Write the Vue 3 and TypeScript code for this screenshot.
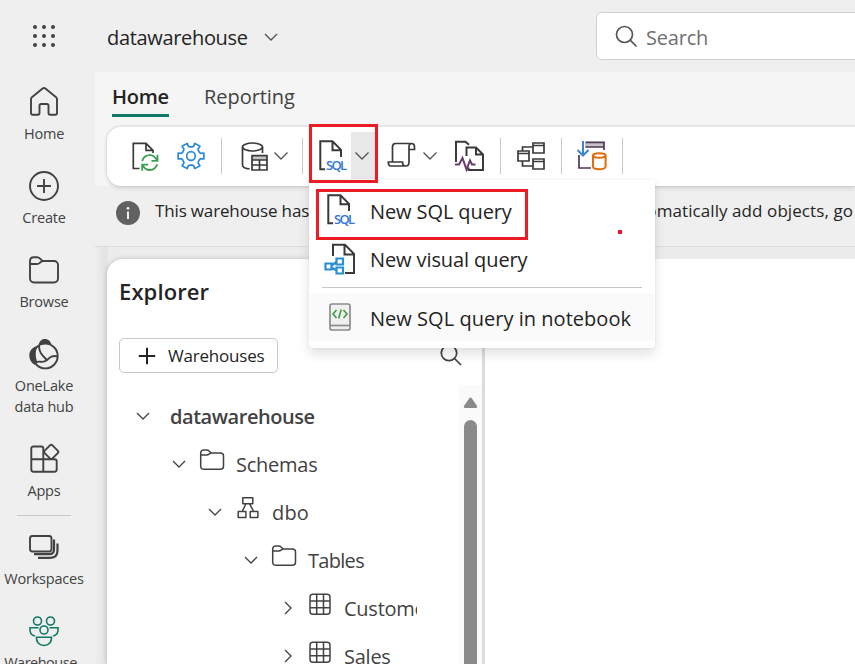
<script setup lang="ts">
interface NavItem {
  id: string
  label: string
}

interface TreeRow {
  label: string
  level: number
  icon: 'none' | 'folder' | 'schema' | 'table'
  open: boolean
}

const navItems: NavItem[] = [
  { id: 'home', label: 'Home' },
  { id: 'create', label: 'Create' },
  { id: 'browse', label: 'Browse' },
  { id: 'onelake', label: 'OneLake\ndata hub' },
  { id: 'apps', label: 'Apps' },
  { id: 'workspaces', label: 'Workspaces' },
  { id: 'warehouse', label: 'Warehouse' },
]

const rows: TreeRow[] = [
  { label: 'datawarehouse', level: 0, icon: 'none', open: true },
  { label: 'Schemas', level: 1, icon: 'folder', open: true },
  { label: 'dbo', level: 2, icon: 'schema', open: true },
  { label: 'Tables', level: 3, icon: 'folder', open: true },
  { label: 'Customer', level: 4, icon: 'table', open: false },
  { label: 'Sales', level: 4, icon: 'table', open: false },
]

// Outline of a six-toothed gear centred on (15, 15)
function gearPath(): string {
  const profile: [number, number][] = [
    [-24, 9.2],
    [-15, 10],
    [-13, 13.2],
    [13, 13.2],
    [15, 10],
    [24, 9.2],
  ]
  const points: string[] = []
  for (let tooth = 0; tooth < 6; tooth++) {
    for (const [offset, radius] of profile) {
      const angle = ((tooth * 60 + offset) * Math.PI) / 180
      points.push(`${(15 + radius * Math.cos(angle)).toFixed(2)} ${(15 + radius * Math.sin(angle)).toFixed(2)}`)
    }
  }
  return `M${points.join('L')}Z`
}
const gear = gearPath()
</script>

<template>
  <div class="app">
    <header class="top">
      <svg class="waffle" width="24" height="24" viewBox="0 0 24 24">
        <template v-for="r in 3" :key="r">
          <circle v-for="c in 3" :key="c" :cx="c * 9 - 6" :cy="r * 9 - 6" r="2" fill="#424242" />
        </template>
      </svg>
      <span class="title">datawarehouse</span>
      <svg class="chev" width="16" height="10" viewBox="0 0 16 10"><path d="M2 2l6 6 6-6" /></svg>
      <div class="search">
        <svg width="24" height="24" viewBox="0 0 24 24" class="line"><circle cx="10.5" cy="10.5" r="8" /><path d="M16.2 16.2l6.3 6.3" /></svg>
        <span>Search</span>
      </div>
    </header>

    <nav class="side">
      <div v-for="n in navItems" :key="n.id" class="nav" :class="n.id">
        <svg width="32" height="32" viewBox="0 0 32 32">
          <path v-if="n.id === 'home'" d="M3 13.200c0-.8.3-1.400.9-1.900L14.600 2.600c.9-.7 1.900-.7 2.800 0l10.700 8.700c.6.5.9 1.100.9 1.900V27c0 1-.7 1.700-1.700 1.700h-5.100c-1 0-1.700-.7-1.700-1.700v-7.300c0-1-.7-1.700-1.700-1.700h-5.600c-1 0-1.700.7-1.700 1.700V27c0 1-.7 1.700-1.700 1.700H4.700C3.700 28.700 3 28 3 27z" />
          <template v-else-if="n.id === 'create'">
            <circle cx="16" cy="16" r="14" /><path d="M16 9v14M9 16h14" />
          </template>
          <path v-else-if="n.id === 'browse'" d="M2 10V7c0-2.200 1.600-3.800 3.800-3.800H9c1.300 0 2 .3 2.800 1.200L14.500 7H26c2.200 0 4 1.800 4 4v13.500c0 2.200-1.800 4-4 4H6c-2.200 0-4-1.800-4-4zh7c1.300 0 2-.4 2.800-1.200L14.500 7" />
          <template v-else-if="n.id === 'onelake'">
            <path class="solid" d="M10.500 7.200C11.500 2.800 14 1 17 1c3.300 0 5.800 2.300 6.500 5.800C19.500 5 14.500 5 10.500 7.200z" />
            <path class="solid" d="M9.500 8C4.500 9.200 1.300 12.500 1.300 17.500c0 4 2 7.500 5.700 9.500 0-1.500.8-2.800 2-3.800C7.200 18.500 7.200 13 9.500 8z" />
            <circle cx="17.300" cy="18" r="12.400" />
            <path d="M11 8c0 6.500 3.500 9.500 8 14.200M6.500 25.500C11 21 14 26.500 19 22c3-2.700 5.500-5 10.500-3.500" />
          </template>
          <template v-else-if="n.id === 'apps'">
            <path d="M15.300 16.300V5.500c0-1.300-.8-2-2-2H5.500c-1.300 0-2.200.8-2.200 2v21c0 1.300.9 2.200 2.200 2.200h21c1.300 0 2.200-.9 2.200-2.200v-8c0-1.300-.9-2.200-2.200-2.200H3.300M15.300 16v12.700" />
            <rect x="17.700" y="3.400" width="11" height="11" rx="1.800" transform="rotate(45 23.200 8.900)" />
          </template>
          <template v-else-if="n.id === 'workspaces'">
            <rect x="2" y="5" width="21.500" height="15.500" rx="2.500" />
            <path d="M26 8.500v10c0 3-1.700 4.700-4.700 4.700H6M29.500 12.500v7c0 4.700-2.500 7.300-7.200 7.300H10" stroke-width="2.200" />
          </template>
          <template v-else>
            <circle cx="9.500" cy="6" r="4" /><circle cx="22.500" cy="6" r="4" /><circle cx="16" cy="15" r="4" />
            <path d="M8.500 22.300h15c.4 5-3 8.200-7.500 8.200s-7.900-3.200-7.500-8.200zM10.500 12.800H2c-.5 5 2 7.700 5 8.200M21.500 12.800H30c.5 5-2 7.700-5 8.200" />
          </template>
        </svg>
        <span>{{ n.label }}</span>
      </div>
    </nav>

    <main class="main">
      <div class="tabs">
        <span class="tab active">Home</span>
        <span class="tab reporting">Reporting</span>
      </div>
      <div class="ribbon">
        <div class="bar">
          <svg class="i-new" width="30" height="30" viewBox="0 0 30 30">
            <path d="M9.500 27.500H3.300V2.300H16l7 7V12M16 2.300v7h7" />
            <path class="green" d="M12.200 20c1.300-4 4-5.800 7.500-5.800 3.300 0 5.800 2 7.300 5.300M27.500 13.800v6h-6M27.200 23.300c-1.300 4-4 5.700-7.500 5.700-3.300 0-5.600-2-7-5.200M12.200 29.700v-6h6" />
          </svg>
          <svg class="i-gear" width="30" height="30" viewBox="0 0 30 30">
            <path class="blue" :d="gear" stroke-linejoin="round" /><circle class="blue" cx="15" cy="15" r="4.300" />
          </svg>
          <i class="sep s1"></i>
          <svg class="i-db" width="30" height="30" viewBox="0 0 30 30">
            <ellipse cx="12.500" cy="6" rx="10" ry="4" />
            <path d="M2.500 6v18c0 2 3 3.600 7 3.900M22.500 6v6" />
            <path class="grayfill" d="M12 14.700h15V19H12z" />
            <path d="M12 14.700h15V29H12zM12 19h15M12 24h15M19.500 19v10" />
          </svg>
          <svg class="chev c1" width="16" height="10" viewBox="0 0 16 10"><path d="M1.500 1.500L8 8l6.500-6.500" /></svg>
          <i class="sep s2"></i>
          <svg class="i-sql" width="30" height="32" viewBox="0 0 30 32">
            <path class="doc" d="M7 29.200H2.300V1.300h12.200l8.500 8.500V17M14.500 1.300v9H23" />
            <text class="sql" x="8" y="30.300" textLength="21">SQL</text>
          </svg>
          <span class="split"><svg class="chev" width="16" height="10" viewBox="0 0 16 10"><path d="M1.500 1.500L8 8l6.500-6.500" /></svg></span>
          <svg class="i-script" width="30" height="30" viewBox="0 0 30 30">
            <path d="M5.500 21V6c0-2.400 1-3.500 3-3.500h16c2 0 3 1.100 3 3.500v2.500h-5.500V6c0-2.200 1-3.500 2.500-3.500M22 8.500V21c0 2.500-1 4-3 4H4c-2 0-2.700-1.500-2.700-4h14.200c0 2.500 1 4 3 4" />
          </svg>
          <svg class="chev c2" width="16" height="10" viewBox="0 0 16 10"><path d="M1.500 1.500L8 8l6.500-6.500" /></svg>
          <svg class="i-copy" width="31" height="32" viewBox="0 0 31 32">
            <path d="M2 22V1.800h9.500l3.500 3M12.500 16V7.500H22l7 7V30H14.500v-2.500M22 7.500v7h7" stroke-width="2" />
            <path class="purple" d="M1 24.500h4L8.500 18l4 11.500 3.500-9 2 4h3.500" />
          </svg>
          <i class="sep s3"></i>
          <svg class="i-diag" width="30" height="30" viewBox="0 0 30 30">
            <path d="M2 10h11v10H2zM2 12.500h11M17 2h11v10H17zM17 4.500h11M17 18h11v10H17zM17 20.500h11M6.500 10V6H17M6.500 20v5H17" />
          </svg>
          <i class="sep s4"></i>
          <svg class="i-imp" width="32" height="32" viewBox="0 0 32 32">
            <path class="grayfill" d="M9 3h19v4H9z" />
            <path d="M9.500 2.300H28V10M9.500 7H28M3 15v13h12" stroke="#51345a" />
            <path class="down" d="M7 1v14M1.500 10L7 15.500 12.500 10" />
            <ellipse cx="23.300" cy="15.500" rx="6.300" ry="2.300" class="orange" />
            <path class="orange" d="M17 15.500v11.300c0 3.200 12.600 3.200 12.600 0V15.500" />
          </svg>
          <i class="sep s5"></i>
        </div>
      </div>
      <div class="info">
        <svg width="24" height="24" viewBox="0 0 24 24"><circle cx="12" cy="12" r="12" fill="#616161" /><path d="M12 10.500V18" stroke="#fff" stroke-width="1.800" /><circle cx="12" cy="7.200" r="1.300" fill="#fff" /></svg>
        <span class="first">This warehouse has</span>
        <span class="last">automatically add objects, go</span>
      </div>
      <div class="body">
        <section class="explorer">
          <h2>Explorer</h2>
          <div class="tools">
            <button class="add">
              <svg width="18" height="18" viewBox="0 0 18 18"><path d="M9 .8v16.400M.8 9h16.400" stroke="#242424" stroke-width="2" /></svg>
              <span>Warehouses</span>
            </button>
            <svg class="line" width="24" height="24" viewBox="0 0 24 24"><circle cx="10" cy="10" r="7.700" /><path d="M15.500 15.500l6.500 6.500" /></svg>
          </div>
          <div class="scroller">
            <div class="tree">
              <div v-for="row in rows" :key="row.label" class="row" :class="['l' + row.level, row.icon]">
                <svg class="arrow" width="14" height="14" viewBox="0 0 14 14">
                  <path :d="row.open ? 'M1 4l6 6 6-6' : 'M4 1l6 6-6 6'" />
                </svg>
                <svg v-if="row.icon !== 'none'" class="kind" width="26" height="24" viewBox="0 0 26 24">
                  <path v-if="row.icon === 'folder'" d="M1.700 7V5c0-1.800 1.200-3 3-3h3c1 0 1.700.3 2.300 1l2.200 2H21.500c1.800 0 3 1.200 3 3v10.300c0 1.800-1.200 3-3 3H4.700c-1.800 0-3-1.200-3-3zh6c1 0 1.700-.3 2.300-.8L12.200 5" />
                  <path v-else-if="row.icon === 'schema'" d="M7.800 1.800h10v6h-10zM3.200 15.600h7.700v6H3.200zM15.200 15.600h7.700v6h-7.700zM10.700 8.200l-3.500 7.300M14.700 8.200l4 7.300" stroke-linejoin="round" />
                  <template v-else>
                    <rect x="3" y="2.200" width="20" height="20" rx="3" />
                    <path d="M9.700 2.200v20M16.500 2.200v20M3 8.900h20M3 15.700h20" />
                  </template>
                </svg>
                <span>{{ row.label }}</span>
              </div>
            </div>
            <div class="track">
              <svg width="15" height="12" viewBox="0 0 15 12"><path d="M6.300 1.200c.6-.9 1.800-.9 2.400 0l5.200 7.600c.7 1.100.2 2.200-1 2.200H2.100c-1.200 0-1.700-1.100-1-2.200z" fill="#8a8a8a" stroke="none" /></svg>
              <i></i>
            </div>
          </div>
        </section>
        <section class="canvas"></section>
      </div>
    </main>

    <div class="menu">
      <div class="item m1">
        <svg width="30" height="32" viewBox="0 0 30 32">
          <path class="doc" d="M7 29.200H2.300V1.300h12.200l8.500 8.500V17M14.500 1.300v9H23" />
          <text class="sql" x="8" y="30.300" textLength="21">SQL</text>
        </svg>
        <span>New SQL query</span>
      </div>
      <div class="item m2">
        <svg width="32" height="32" viewBox="0 0 32 32">
          <path class="doc" d="M9 13V1.800h12l9 9V30H21M20.500 1.800V11.500H30" />
          <path class="nodes" d="M1.500 20.500h6v6h-6zM12.500 15.500h6.500v6h-6.500zM12.500 24.500h6.500v6h-6.500zM7.500 22.500l5-3.500M7.500 24.500l5 3" />
        </svg>
        <span>New visual query</span>
      </div>
      <hr />
      <div class="item m3">
        <svg width="32" height="32" viewBox="0 0 32 32">
          <rect x="6" y="3" width="20" height="26" rx="2" fill="#f0f0f0" stroke="#8c8c8c" />
          <path d="M6 24.500h20" stroke="#8c8c8c" />
          <path d="M12.500 9L9 13l3.500 4M19.500 9l3.500 4-3.500 4M17.200 8.500l-2.500 9" stroke="#3f9b43" stroke-width="1.600" />
        </svg>
        <span>New SQL query in notebook</span>
      </div>
    </div>
    <div class="mark a"></div>
    <div class="mark b"></div>
    <div class="dot"></div>
  </div>
</template>

<style>
body { margin: 0; overflow: hidden; }
</style>

<style scoped>
.app { position: relative; display: grid; grid-template: 72px 592px / 95px 760px; width: 855px; height: 664px; overflow: hidden; background: #efefef; color: #242424; font-family: "Open Sans", "Noto Sans", sans-serif; font-size: 20px; white-space: nowrap; }
svg { display: block; flex: none; fill: none; stroke: #424242; stroke-width: 1.7; overflow: visible; }
circle[fill] { stroke: none; }
.top { grid-column: 1 / 3; display: flex; align-items: center; padding-left: 32px; }
.waffle { margin-right: 51px; }
.title { width: 142px; flex: none; margin-top: 3px; letter-spacing: -.33px; }
.chev { stroke: #555; stroke-width: 1.4; }
.top .chev { margin: 2px 0 0 14px; }
.search { box-sizing: border-box; display: flex; align-items: center; width: 300px; height: 48px; margin-left: 317px; padding-left: 17px; flex: none; background: #fff; border: 1px solid #d1d1d1; border-radius: 6px; color: #707070; letter-spacing: -.2px; }
.search span { margin: 3px 0 0 8px; }
.line { stroke: #555; stroke-width: 1.7; }

.side { display: flex; flex-direction: column; align-items: center; width: 88px; padding-top: 14px; }
.nav { display: flex; flex-direction: column; align-items: center; height: 84px; flex: none; color: #424242; font-size: 14.500px; line-height: 21px; text-align: center; white-space: pre; letter-spacing: -.2px; }
.nav svg { stroke-width: 1.9; margin-bottom: 5px; }
.nav .solid { fill: #424242; stroke: none; }
.nav.onelake { height: 105px; }
.nav.apps { height: 73px; padding-bottom: 13px; border-bottom: 1px solid #c8c8c8; margin-bottom: 15px; width: 54px; box-sizing: border-box; }
.nav.warehouse svg { stroke: #117865; stroke-width: 1.6; }
.nav.warehouse span { letter-spacing: -.5px; margin-left: -7px; }

.main { display: flex; flex-direction: column; background: #efefef; }
.tabs { display: flex; height: 54px; padding-left: 17px; box-sizing: border-box; background: #f5f5f5; flex: none; }
.tab { height: 45px; box-sizing: border-box; padding-top: 11px; line-height: 28px; color: #424242; }
.tab.active { width: 57px; font-weight: 600; color: #242424; border-bottom: 3px solid #117865; letter-spacing: -.3px; }
.reporting { margin-left: 35px; letter-spacing: -.05px; }
.ribbon { height: 60px; padding-left: 12px; background: #f5f5f5; flex: none; }
.bar { display: flex; align-items: center; height: 60px; box-sizing: border-box; padding-bottom: 2px; border-top: 1px solid #e6e6e6; border-radius: 14px 0 0 14px; background: #fff; box-shadow: 0 2px 4px #0002, 0 0 2px #0002; }
.bar svg { stroke: #3b3a39; }
.bar svg.chev { stroke: #555; }
.bar .green { stroke: #3ba052; stroke-width: 1.8; }
.blue { stroke: #2a8ad4; }
.down { stroke: #3b82d9; stroke-width: 2; }
.nodes { stroke: #2a8dd2; stroke-width: 2.2; }
.purple { stroke: #693a70; stroke-width: 2; }
.orange { stroke: #e06c0a; stroke-width: 2; }
.grayfill { fill: #c4c4c4; stroke: none; }
.doc { stroke: #3b3a39; stroke-width: 2; }
.sql { fill: #3277d5; stroke: none; font: 600 13px "Open Sans", sans-serif; }
.sep { width: 1px; height: 36px; background: #c8c8c8; flex: none; }
.i-new { margin-left: 23px; }
.i-gear { margin-left: 16px; }
.s1 { margin-left: 15px; }
.i-db { margin-left: 18px; }
.c1 { margin-left: 3px; }
.s2 { margin-left: 13px; }
.i-sql { margin-left: 15px; }
.split { display: flex; align-items: center; justify-content: center; width: 26px; height: 47px; margin-left: 3px; background: #e8e8e8; }
.split .chev { margin-right: 4px; }
.i-script { margin-left: 10px; }
.c2 { margin-left: 5px; }
.i-copy { margin-left: 16px; }
.s3 { margin-left: 15px; }
.i-diag { margin-left: 15px; }
.s4 { margin-left: 15px; }
.i-imp { margin-left: 14px; }
.s5 { margin-left: 14px; }

.info { display: flex; align-items: center; height: 61px; box-sizing: border-box; padding: 0 2px 7px 21px; border-bottom: 1px solid #dcdcdc; font-size: 17px; flex: none; }
.first { margin-left: 15px; margin-top: -5px; letter-spacing: -.15px; }
.last { margin-left: auto; margin-top: -5px; letter-spacing: .08px; }

.body { display: flex; flex: 1; padding: 12px 0 0 12px; background: linear-gradient(90deg, #eeeeee, #e2e2e2 12px, #ececec 13px); }
.explorer { display: flex; flex-direction: column; width: 375px; background: #fff; border-radius: 16px 0 0 0; flex: none; box-shadow: 0 0 5px #0003; }
.canvas { flex: 1; margin-left: 0; border-left: 3px solid #dcdcdc; background: #fff; box-shadow: 0 0 5px #0002; clip-path: inset(0); }
h2 { margin: 17px 0 0 12px; font-size: 22px; line-height: 30px; font-weight: 600; letter-spacing: .1px; }
.tools { display: flex; justify-content: space-between; margin: 32px 19px 0 12px; }
.add { display: flex; align-items: center; box-sizing: border-box; width: 159px; height: 35px; padding: 0 0 0 18px; border: 1px solid #c8c8c8; border-radius: 5px; background: #fff; color: #242424; font: 17px "Open Sans", sans-serif; letter-spacing: -.2px; }
.add span { margin-left: 12px; }
.tools .line { margin-top: 5px; stroke: #424242; }
.scroller { display: flex; margin-top: 12px; height: 279px; }
.tree { width: 310px; padding-top: 7px; overflow: hidden; }
.row { display: flex; align-items: center; height: 48px; color: #424242; letter-spacing: -.25px; }
.row.l3 { letter-spacing: -.7px; }
.row.schema { letter-spacing: .2px; }
.arrow { margin-left: 29px; stroke-width: 1.3; }
.row .kind { margin: -8px 0 0 13px; stroke-width: 1.5; }
.row span { margin: 1px 0 0 11px; }
.row.l0 span { margin: 0 0 0 20px; font-weight: 600; letter-spacing: -.45px; }
.l1 .arrow { margin-left: 65px; }
.l2 .arrow { margin-left: 101px; }
.l3 .arrow { margin-left: 137px; }
.l4 .arrow { margin-left: 174px; }
.l4 .kind { margin-left: 12px; }
.track { display: flex; flex-direction: column; align-items: center; width: 23px; margin-left: 42px; padding-top: 12px; box-sizing: border-box; background: #fafafa; }
.track i { width: 13px; height: 300px; margin-top: 11px; border-radius: 7px; background: #8a8a8a; flex: none; }

.menu { position: absolute; left: 309px; top: 180px; width: 346px; height: 168px; box-sizing: border-box; padding-top: 7px; border-radius: 0 0 4px 4px; background: #fff; box-shadow: 0 6px 12px #0000001f, 0 0 3px #0000000f; }
.item { display: flex; align-items: center; height: 48px; box-sizing: border-box; padding-left: 15px; }
.item svg { width: 32px; margin-top: -1px; }
.m1 svg { margin: -2px -1px 0 1px; }
.item span { margin-left: 14px; letter-spacing: -.1px; }
hr { width: 320px; margin: 4px 0 5px 13px; border: 0; border-top: 1px solid #c8c8c8; }
.m3 { margin: 0 1px; padding-left: 14px; background: #fafafa; }
.m3 svg { margin-top: 0; }
.m3 span { margin-top: 2px; letter-spacing: .03px; }
.mark { position: absolute; box-sizing: border-box; border: 3px solid #ed1c24; }
.a { left: 309px; top: 124px; width: 69px; height: 59px; }
.b { left: 316px; top: 189px; width: 212px; height: 51px; }
.dot { position: absolute; left: 618px; top: 230px; width: 4px; height: 4px; background: #ed1c24; }
</style>
